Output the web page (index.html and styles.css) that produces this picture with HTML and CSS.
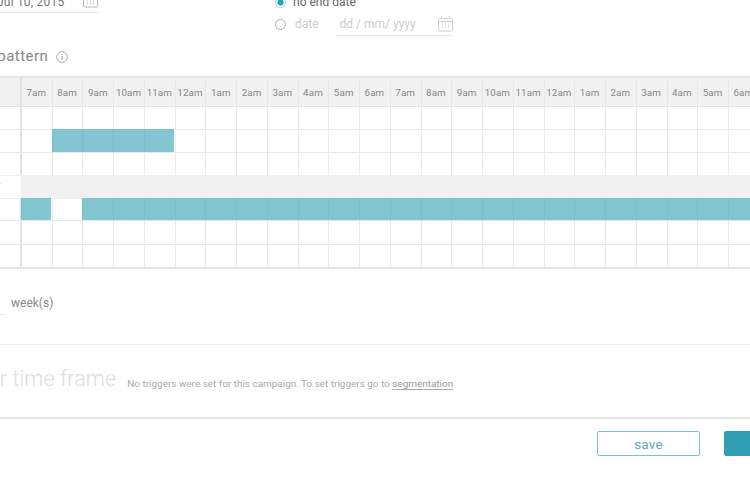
FILE: index.html
```html
<!DOCTYPE html>
<html lang="en">
<head>
<meta charset="utf-8">
<title>Campaign schedule</title>
<link rel="stylesheet" href="styles.css">
</head>
<body>
<main class="page">
  <section class="dates">
    <div class="date-start">
      <span class="date-value">Jul 10, 2015</span>
      <svg class="cal" width="15" height="16" viewBox="0 0 15 16"><path d="M3.5 2.5h-2a1 1 0 0 0-1 1v10.500a1 1 0 0 0 1 1h12a1 1 0 0 0 1-1V3.500a1 1 0 0 0-1-1h-2M3.500.5v3M11.500.5v3M5 2.500h5M.5 5.500h14" fill="none" stroke="currentColor"/><path d="M4 8h1M7 8h1M10 8h1M4 10h1M7 10h1M10 10h1M4 12h1M7 12h1M10 12h1" stroke="currentColor"/></svg>
    </div>
    <div class="end-options">
      <div class="radio-row">
        <span class="radio radio-on"></span>
        <span class="radio-label">no end date</span>
      </div>
      <div class="radio-row radio-row-off">
        <span class="radio"></span>
        <span class="radio-label">date</span>
        <div class="date-end">
          <span>dd / mm/ yyyy</span>
          <svg class="cal" width="15" height="16" viewBox="0 0 15 16"><path d="M3.5 2.5h-2a1 1 0 0 0-1 1v10.500a1 1 0 0 0 1 1h12a1 1 0 0 0 1-1V3.500a1 1 0 0 0-1-1h-2M3.500.5v3M11.500.5v3M5 2.500h5M.5 5.500h14" fill="none" stroke="currentColor"/><path d="M4 8h1M7 8h1M10 8h1M4 10h1M7 10h1M10 10h1M4 12h1M7 12h1M10 12h1" stroke="currentColor"/></svg>
        </div>
      </div>
    </div>
  </section>

  <h2 class="pattern-title">
    <span class="pattern-text">Delivery pattern</span>
    <svg class="info" width="12" height="12" viewBox="0 0 12 12"><circle cx="6" cy="6" r="5.300" fill="none" stroke="currentColor"/><path d="M6 5v4M6 3v1.200" stroke="currentColor" stroke-width="1.200"/></svg>
  </h2>

  <section class="schedule">
    <div class="hours">
      <span class="corner"></span>
      <span>7am</span><span>8am</span><span>9am</span><span>10am</span><span>11am</span><span>12am</span>
      <span>1am</span><span>2am</span><span>3am</span><span>4am</span><span>5am</span><span>6am</span>
      <span>7am</span><span>8am</span><span>9am</span><span>10am</span><span>11am</span><span>12am</span>
      <span>1am</span><span>2am</span><span>3am</span><span>4am</span><span>5am</span><span>6am</span>
    </div>
    <div class="day day-a"><span class="day-name"></span></div>
    <div class="day day-b"><span class="day-name"></span><span class="bar bar-morning"></span></div>
    <div class="day day-c"><span class="day-name"></span></div>
    <div class="day day-off"><span class="day-name">-</span></div>
    <div class="day day-e"><span class="day-name"></span><span class="bar bar-first"></span><span class="bar bar-rest"></span></div>
    <div class="day day-f"><span class="day-name"></span></div>
    <div class="day day-g"><span class="day-name"></span></div>
  </section>

  <section class="repeat">
    <span class="repeat-input"></span>
    <span class="repeat-unit">week(s)</span>
  </section>

  <section class="triggers">
    <h2 class="triggers-title">Trigger time frame</h2>
    <p class="triggers-note">No triggers were set for this campaign. To set triggers go to <a class="triggers-link" href="#">segmentation</a></p>
  </section>

  <footer class="actions">
    <button class="btn btn-save" type="button">save</button>
    <button class="btn btn-next" type="button">next</button>
  </footer>
</main>
</body>
</html>
```

FILE: styles.css
```css
html, body {
  margin: 0;
  padding: 0;
  height: 100%;
  overflow: hidden;
  background: #fff;
}

.page {
  width: 750px;
  height: 500px;
  overflow: hidden;
  font-family: Roboto, "Liberation Sans", sans-serif;
  color: #888;
}

/* Date fields, scrolled partly off the top */
.dates {
  height: 45px;
  margin-top: -9px;
  display: flex;
  align-items: flex-start;
}

.date-start {
  box-sizing: border-box;
  width: 99px;
  height: 22px;
  border-bottom: 1px solid #e8e8e8;
  display: flex;
  justify-content: space-between;
  align-items: center;
  padding-right: 1px;
  color: #777;
  font-size: 12px;
}

.date-value {
  margin-left: -3px;
  letter-spacing: 0.2px;
  white-space: nowrap;
}

.date-start .cal {
  margin-bottom: 3px;
}

.cal {
  color: #bbb;
  flex: none;
}

.end-options {
  margin-left: 176px;
  width: 200px;
  display: flex;
  flex-direction: column;
}

.radio-row {
  display: flex;
  align-items: center;
  height: 22px;
  font-size: 12px;
  color: #666;
}

.radio-row-off {
  color: #ccc;
}

.radio {
  box-sizing: border-box;
  width: 11px;
  height: 11px;
  border: 1.500px solid #aaa;
  border-radius: 50%;
  margin-right: 7px;
  flex: none;
}

.radio-row-off .radio {
  margin-right: 9px;
}

.radio-on {
  border-color: #9fd0da;
  background: radial-gradient(circle, #2f9fb3 0 2.800px, #fff 3.400px);
}

.date-end {
  box-sizing: border-box;
  width: 116px;
  height: 23px;
  margin-left: 17px;
  padding-left: 4px;
  border-bottom: 1px solid #e8e8e8;
  display: flex;
  justify-content: space-between;
  align-items: center;
  color: #ccc;
  white-space: nowrap;
  flex: none;
}

.date-end .cal {
  color: #ccc;
  margin-right: -1px;
}

/* Section title */
.pattern-title {
  margin: 0 0 0 -63px;
  height: 40px;
  padding-top: 10px;
  box-sizing: border-box;
  display: flex;
  align-items: flex-start;
  font-size: 15px;
  line-height: 20px;
  font-weight: 400;
  color: #888;
  letter-spacing: 0.45px;
  white-space: nowrap;
}

.info {
  margin: 5px 0 0 8px;
  color: #aaa;
}

/* Schedule grid */
.schedule {
  --col: 30.740px;
  height: 191px;
  border-bottom: 2px solid #e4e4e4;
}

.hours,
.day {
  display: grid;
  grid-template-columns: 21px repeat(24, var(--col));
  width: 800px;
}

.hours {
  box-sizing: border-box;
  height: 31px;
  background-color: #f1f1f1;
  border-top: 2px solid #e4e4e4;
  border-bottom: 1px solid #e2e2e2;
  font-size: 9.800px;
  letter-spacing: 0.1px;
  color: #888;
  line-height: 29px;
  text-align: center;
  background-image: repeating-linear-gradient(to right, #e8e8e8 0 1px, transparent 1px var(--col));
  background-position: 21px 0;
  background-repeat: no-repeat;
}

.hours span {
  white-space: nowrap;
}

.corner {
  display: block;
  border-right: 2px solid #e2e2e2;
  margin-right: -1px;
}

.day {
  box-sizing: border-box;
  border-bottom: 1px solid #e8e8e8;
  grid-template-rows: 1fr;
  background-image: repeating-linear-gradient(to right, #ebebeb 0 1px, transparent 1px var(--col));
  background-position: 21px 0;
  background-repeat: no-repeat;
}

.day-a { height: 23px; }
.day-b { height: 23px; }
.day-c { height: 23px; border-bottom-color: #f1f1f1; }
.day-off { height: 23px; }
.day-e { height: 22px; }
.day-f { height: 24px; }
.day-g { height: 22px; border-bottom: 0; }

.day-name {
  grid-column: 1;
  grid-row: 1;
  border-right: 2px solid #e2e2e2;
  margin-right: -1px;
  font-size: 9px;
  line-height: 14px;
  color: #999;
}

.day-off {
  background-image: linear-gradient(#f1f1f1, #f1f1f1);
  background-size: 100% 100%;
  border-bottom-color: #f1f1f1;
}

.day-off .day-name {
  background: #fff;
  border-right: 0;
  margin: 0 0 0 -2px;
}

.bar {
  grid-row: 1;
  background: rgba(65, 168, 186, 0.65);
  margin-top: -1px;
}

.bar-morning {
  grid-column: 3 / 7;
  margin-right: 0.700px;
}

.bar-first {
  grid-column: 2 / 3;
  margin-right: 0.700px;
}

.bar-rest {
  grid-column: 4 / 26;
}

/* Repeat every */
.repeat {
  height: 76px;
  box-sizing: border-box;
  padding-top: 25px;
  display: flex;
  align-items: flex-start;
  border-bottom: 1px solid #ececec;
}

.repeat-input {
  width: 6px;
  height: 20px;
  border-bottom: 1px solid #e8e8e8;
  flex: none;
}

.repeat-unit {
  margin-left: 5px;
  font-size: 12px;
  line-height: 18px;
  color: #888;
}

/* Triggers */
.triggers {
  height: 74px;
  box-sizing: border-box;
  padding-top: 22px;
  margin-left: -60px;
  width: 810px;
  display: flex;
  align-items: flex-start;
  white-space: nowrap;
  border-bottom: 2px solid #e4e4e4;
}

.triggers-title {
  margin: 0;
  font-size: 21.500px;
  line-height: 24px;
  font-weight: 300;
  color: #ddd;
  letter-spacing: 0.1px;
}

.triggers-note {
  margin: 10px 0 0 11px;
  font-size: 9.950px;
  line-height: 13px;
  color: #aaa;
}

.triggers-link {
  color: #999;
  text-decoration: none;
  border-bottom: 1px solid #aaa;
}

/* Footer */
.actions {
  display: flex;
  padding: 12px 0 0 597px;
  width: 300px;
}

.btn {
  box-sizing: border-box;
  height: 25px;
  padding: 0;
  border-radius: 2px;
  font-family: inherit;
  font-size: 13.500px;
  letter-spacing: 0.2px;
  flex: none;
}

.btn-save {
  width: 103px;
  background: #fff;
  border: 1px solid #7cc0cc;
  color: #5aaabb;
}

.btn-next {
  width: 104px;
  margin-left: 24px;
  background: #2f9fb3;
  border: 1px solid #2f9fb3;
  color: #fff;
}
```
